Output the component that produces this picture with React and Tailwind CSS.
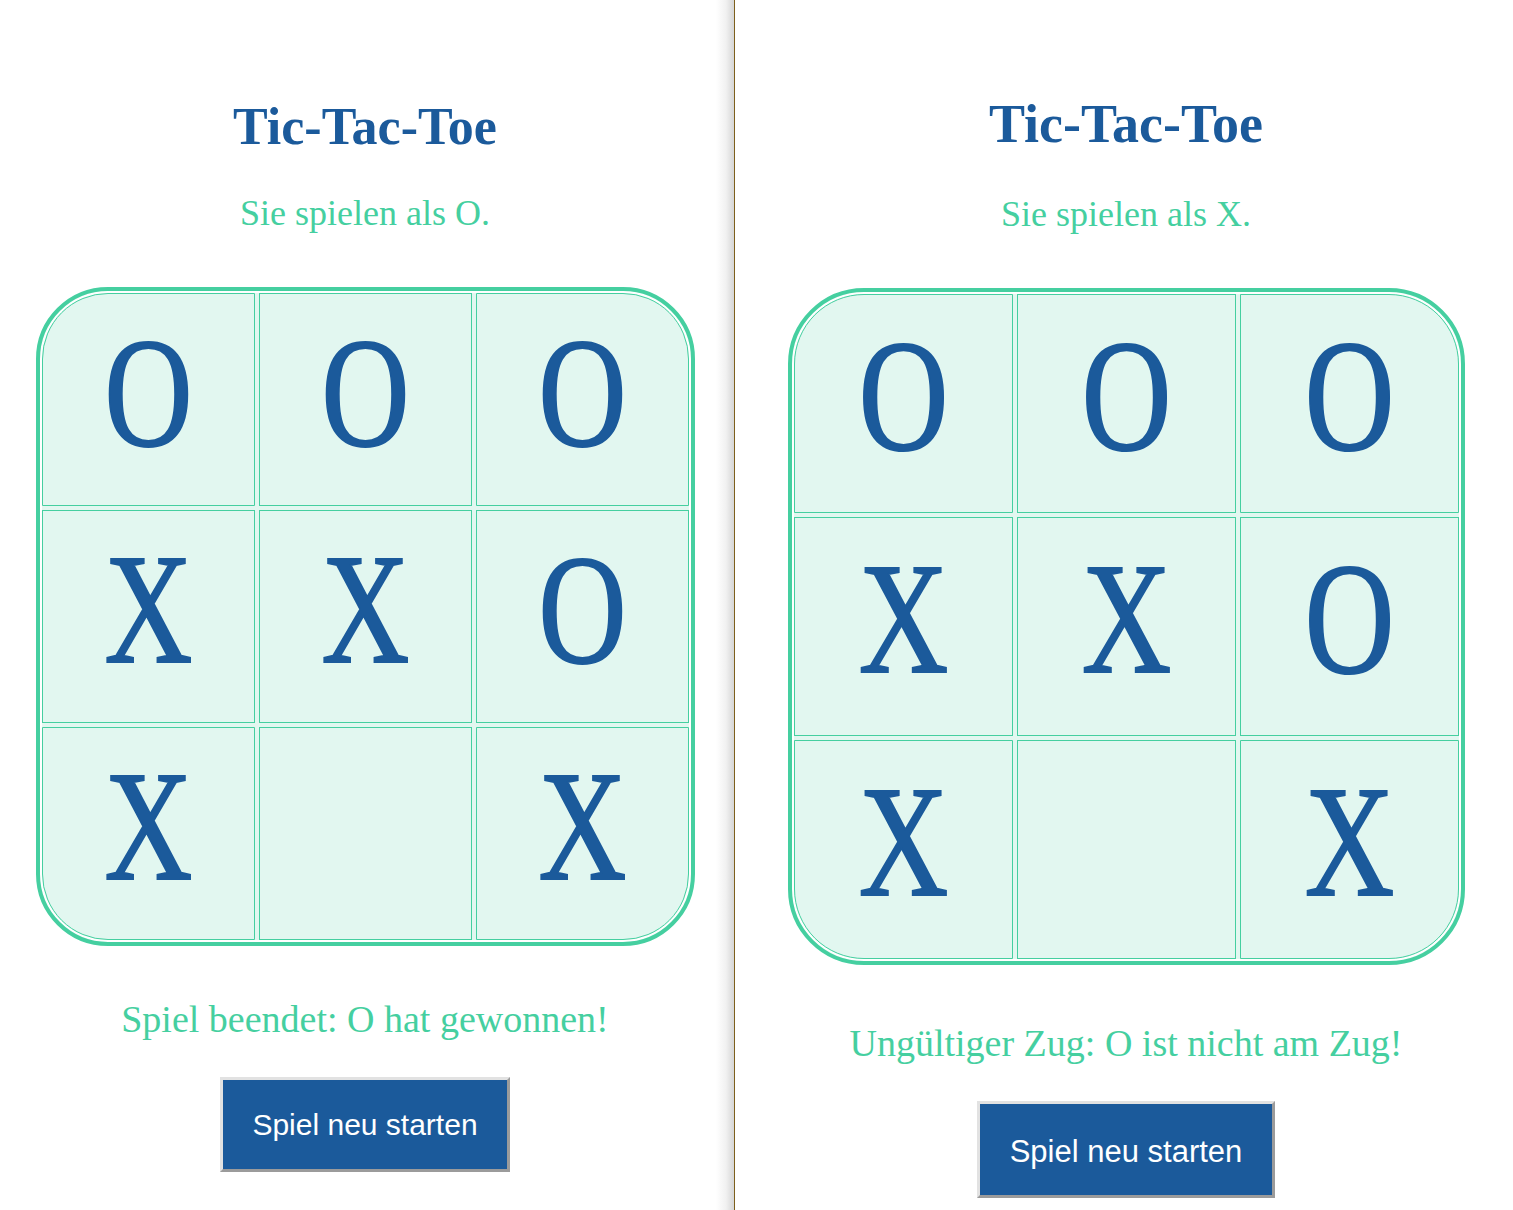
import React from "react";

const CELLS = ["O", "O", "O", "X", "X", "O", "X", "", "X"];

function Board({ big }) {
  const boardCls = big
    ? "mt-[56px] grid grid-cols-[repeat(3,219px)] grid-rows-[repeat(3,219px)] gap-[4px] p-[2px] border-[4px] border-[#45cfa0] rounded-[76px] bg-[#e2f7f0] shadow-[inset_0_0_0_2px_#ffffff]"
    : "mt-[56px] grid grid-cols-[repeat(3,213px)] grid-rows-[repeat(3,213px)] gap-[4px] p-[2px] border-[4px] border-[#45cfa0] rounded-[72px] bg-[#e2f7f0] shadow-[inset_0_0_0_2px_#ffffff]";
  const cornersSmall = ["rounded-tl-[66px]", "", "rounded-tr-[66px]", "", "", "", "rounded-bl-[66px]", "", "rounded-br-[66px]"];
  const cornersBig = ["rounded-tl-[70px]", "", "rounded-tr-[70px]", "", "", "", "rounded-bl-[70px]", "", "rounded-br-[70px]"];
  const corners = big ? cornersBig : cornersSmall;
  const cellBase = big
    ? "flex items-center justify-center pb-[16px] border border-[#45cfa0] bg-[#e2f7f0]"
    : "flex items-center justify-center pb-[14px] border border-[#45cfa0] bg-[#e2f7f0]";
  const glyph = big
    ? "inline-block scale-x-[0.78] leading-none text-[159px] font-['Liberation_Serif',serif] text-[#1b5a9b] [-webkit-text-stroke:2px_#1b5a9b]"
    : "inline-block scale-x-[0.78] leading-none text-[156px] font-['Liberation_Serif',serif] text-[#1b5a9b] [-webkit-text-stroke:2px_#1b5a9b]";
  return (
    <div className={boardCls}>
      {CELLS.map((c, i) => (
        <div key={i} className={cellBase + " " + corners[i]}>
          {c ? <span className={glyph}>{c}</span> : null}
        </div>
      ))}
    </div>
  );
}

function LeftPane() {
  return (
    <div className="w-[734px] shrink-0 h-full flex flex-col items-center pr-[4px] bg-[linear-gradient(to_right,#ffffff_0px,#ffffff_716px,#f1f1f1_726px,#d9d9d9_733px)]">
      <h1 className="mt-[101px] text-[52px] leading-none font-bold text-[#1b5a9b] font-['Liberation_Serif',serif]">
        Tic-Tac-Toe
      </h1>
      <p className="mt-[42px] text-[36px] leading-none text-[#45cfa0] font-['Liberation_Serif',serif]">
        Sie spielen als O.
      </p>
      <Board />
      <p className="mt-[54px] text-[38px] leading-none text-[#45cfa0] font-['Liberation_Serif',serif]">
        Spiel beendet: O hat gewonnen!
      </p>
      <button className="mt-[39px] w-[290px] h-[95px] flex items-center justify-center bg-[#1b5a9b] border-[3px] border-t-[#e2e2e2] border-l-[#e2e2e2] border-r-[#9b9b9b] border-b-[#9b9b9b] text-white text-[30px] leading-none font-['Liberation_Sans',sans-serif]">
        Spiel neu starten
      </button>
    </div>
  );
}

function RightPane() {
  return (
    <div className="flex-1 h-full flex flex-col items-center pl-[4px] bg-white">
      <h1 className="mt-[97px] text-[54px] leading-none font-bold text-[#1b5a9b] font-['Liberation_Serif',serif]">
        Tic-Tac-Toe
      </h1>
      <p className="mt-[45px] text-[36px] leading-none text-[#45cfa0] font-['Liberation_Serif',serif]">
        Sie spielen als X.
      </p>
      <Board big />
      <p className="mt-[59px] text-[38px] leading-none text-[#45cfa0] font-['Liberation_Serif',serif]">
        Ungültiger Zug: O ist nicht am Zug!
      </p>
      <button className="mt-[39px] w-[298px] h-[97px] flex items-center justify-center pt-[4px] bg-[#1b5a9b] border-[3px] border-t-[#e2e2e2] border-l-[#e2e2e2] border-r-[#9b9b9b] border-b-[#9b9b9b] text-white text-[31px] leading-none font-['Liberation_Sans',sans-serif]">
        Spiel neu starten
      </button>
    </div>
  );
}

export default function App() {
  return (
    <div className="flex w-[1513px] h-[1210px] overflow-hidden bg-white">
      <LeftPane />
      <div className="w-px shrink-0 h-full bg-[#7d5f1c]" />
      <RightPane />
    </div>
  );
}
